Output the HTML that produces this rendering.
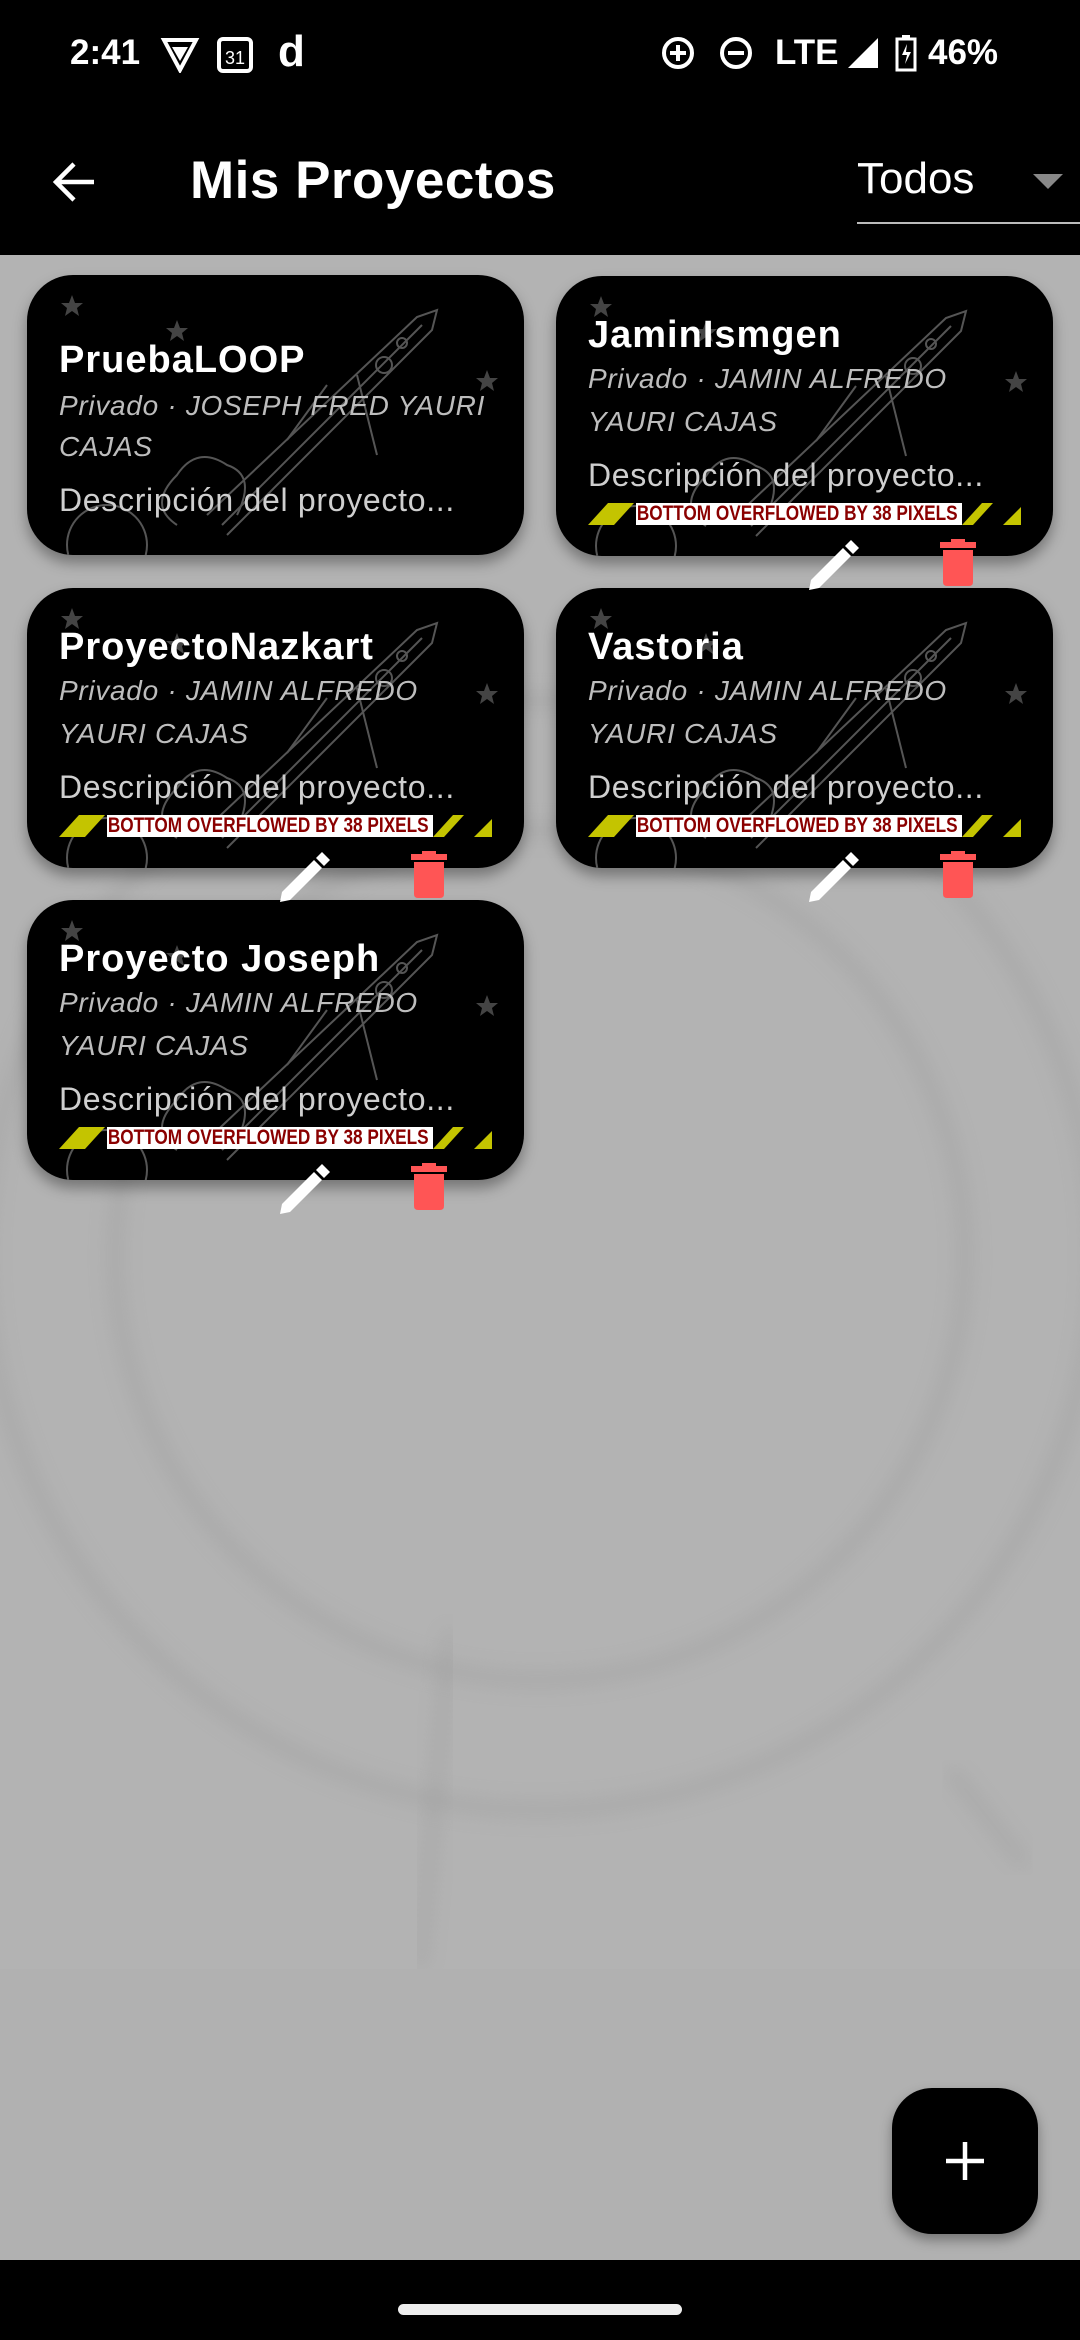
<!DOCTYPE html>
<html><head><meta charset="utf-8"><style>
*{margin:0;padding:0;box-sizing:border-box}
body{width:1080px;height:2340px;background:#b1b1b1;position:relative;overflow:hidden;font-family:"Liberation Sans",sans-serif}
.abs{position:absolute}
.card{position:absolute;width:497px;height:280px;background:#000;border-radius:46px;box-shadow:0 8px 14px rgba(0,0,0,.35);overflow:hidden}
.t{position:absolute;left:32px;color:#fff;font-weight:bold;font-size:38px;white-space:nowrap;letter-spacing:1px}
.s{position:absolute;left:32px;color:#bdbdbd;font-style:italic;font-size:28px;white-space:nowrap;letter-spacing:.7px}
.d{position:absolute;left:32px;color:#cfcfcf;font-size:32px;white-space:nowrap;letter-spacing:.7px}
.ban{position:absolute;left:32px;top:227px;width:433px;height:22px}
.bt{position:absolute;left:48px;top:0;width:326px;height:22px;background:#fff;overflow:hidden}
.bt span{display:block;white-space:nowrap;color:#8a0000;font-weight:bold;font-size:21px;line-height:22px;transform:scaleX(.82);transform-origin:0 0;width:420px;text-align:left;padding-left:1px}
.ic{position:absolute}
</style></head><body>
<div class="abs" style="left:0;top:0;width:1080px;height:255px;background:#000"></div>
<div class="abs" style="left:70px;top:33px;color:#fff;font-size:35px;font-weight:bold">2:41</div>
<svg class="abs" style="left:160px;top:37px" width="40" height="36" viewBox="0 0 40 36"><path d="M4 3h32l-16 30z" fill="none" stroke="#fff" stroke-width="4"/><path d="M12 10h16l-8 14z" fill="#fff"/></svg>
<svg class="abs" style="left:216px;top:36px" width="40" height="38"><rect x="3" y="3" width="32" height="32" rx="4" fill="none" stroke="#fff" stroke-width="4"/><text x="19" y="28" fill="#fff" font-size="18" text-anchor="middle" font-family="Liberation Sans">31</text></svg>
<div class="abs" style="left:278px;top:27px;color:#fff;font-size:44px;font-weight:bold">d</div>
<svg class="abs" style="left:660px;top:35px" width="36" height="36"><circle cx="18" cy="18" r="14" fill="none" stroke="#fff" stroke-width="4"/><path d="M18 10v16M10 18h16" stroke="#fff" stroke-width="4"/></svg>
<svg class="abs" style="left:718px;top:35px" width="36" height="36"><circle cx="18" cy="18" r="14" fill="none" stroke="#fff" stroke-width="4"/><path d="M10 18h16" stroke="#fff" stroke-width="4"/></svg>
<div class="abs" style="left:775px;top:33px;color:#fff;font-size:35px;font-weight:bold">LTE</div>
<svg class="abs" style="left:846px;top:36px" width="34" height="34"><path d="M32 2v30H2z" fill="#fff"/></svg>
<svg class="abs" style="left:895px;top:34px" width="22" height="38"><rect x="2" y="5" width="18" height="31" fill="none" stroke="#fff" stroke-width="3"/><rect x="7" y="1" width="8" height="5" fill="#fff"/><path d="M12 10l-5 11h5l-2 9 6-12h-5z" fill="#fff"/></svg>
<div class="abs" style="left:928px;top:33px;color:#fff;font-size:35px;font-weight:bold">46%</div>
<svg class="abs" style="left:50px;top:158px" width="48" height="48" viewBox="0 0 48 48"><path d="M44 24H6M24 6L6 24l18 18" fill="none" stroke="#fff" stroke-width="4.5"/></svg>
<div class="abs" style="left:190px;top:150px;color:#fff;font-size:53px;font-weight:bold;letter-spacing:.5px">Mis Proyectos</div>
<div class="abs" style="left:857px;top:154px;color:#fff;font-size:44px">Todos</div>
<svg class="abs" style="left:1033px;top:174px" width="30" height="16"><path d="M0 0h30L15 15z" fill="#888"/></svg>
<div class="abs" style="left:857px;top:222px;width:223px;height:2px;background:#bbb"></div>
<svg class="abs" style="left:0;top:255px" width="1080" height="1715" viewBox="0 255 1080 1715">
<defs><filter id="sh"><feGaussianBlur stdDeviation="10"/></filter></defs>
<rect x="0" y="255" width="1080" height="1714" fill="#b3b3b3"/>
<circle cx="540" cy="1255" r="555" fill="none" stroke="#959595" stroke-width="10" filter="url(#sh)" opacity=".5"/>
<circle cx="540" cy="1255" r="425" fill="none" stroke="#959595" stroke-width="10" filter="url(#sh)" opacity=".5"/>
<path d="M450 1630 L420 1969" fill="none" stroke="#959595" stroke-width="10" filter="url(#sh)" opacity=".45"/>
<path d="M950 1770 L1025 1865" fill="none" stroke="#959595" stroke-width="10" filter="url(#sh)" opacity=".45"/>
</svg>
<div class="abs" style="left:0;top:1969px;width:1080px;height:291px;background:#b1b1b1"></div>

<svg width="0" height="0" style="position:absolute"><defs>
<g id="rk" fill="none" stroke="#555" stroke-width="2">
<path d="M180 240 L390 42 L410 35 L405 55 L200 260"/><path d="M195 250 L395 50"/><path d="M300 110 l-40 55 M330 100 l20 80"/>
<circle cx="357" cy="90" r="8"/><circle cx="375" cy="68" r="5"/>
<path d="M150 250 q-30 -20 0 -50 q20 -30 50 -10 q30 10 10 50"/>
<circle cx="80" cy="270" r="40"/>
<path d="M45 20l3 8 8 0-6 5 2 8-7-5-7 5 2-8-6-5 8 0z" fill="#444" stroke="none"/>
<path d="M150 45l3 8 8 0-6 5 2 8-7-5-7 5 2-8-6-5 8 0z" fill="#444" stroke="none"/>
<path d="M460 95l3 8 8 0-6 5 2 8-7-5-7 5 2-8-6-5 8 0z" fill="#444" stroke="none"/>
</g>
<g id="pen"><path d="M4 44 L36 12 L44 20 L12 52 L2 54z" fill="#fff"/><path d="M38 10 L44 4 L52 12 L46 18z" fill="#fff"/></g>
<g id="bin"><rect x="0" y="3" width="36" height="6" fill="#f55"/><rect x="11" y="0" width="14" height="5" fill="#f55"/><path d="M3 11h30v32q0 4-4 4H7q-4 0-4-4z" fill="#f55"/></g>
<g id="ban"><path d="M0 22 L20 0 H46 L26 22z" fill="#c4c400"/><path d="M374 22 L394 0 H405 L385 22z" fill="#c4c400"/><path d="M415 22 L433 4 V22z" fill="#c4c400"/></g>
</defs></svg>

<div class="card" style="left:27px;top:275px"><svg class="abs" style="left:0;top:0" width="497" height="280"><use href="#rk"/></svg>
<div class="t" style="top:64px">PruebaLOOP</div>
<div class="s" style="top:115px">Privado · JOSEPH FRED YAURI</div>
<div class="s" style="top:156px">CAJAS</div>
<div class="d" style="top:207px">Descripción del proyecto...</div></div>

<div class="card" style="left:556px;top:276px"><svg class="abs" style="left:0;top:0" width="497" height="280"><use href="#rk"/></svg>
<div class="t" style="top:38px">JaminIsmgen</div>
<div class="s" style="top:87px">Privado · JAMIN ALFREDO</div>
<div class="s" style="top:130px">YAURI CAJAS</div>
<div class="d" style="top:181px">Descripción del proyecto...</div>
<svg class="ban" width="433" height="22"><use href="#ban"/></svg><div class="ban"><div class="bt"><span>BOTTOM OVERFLOWED BY 38 PIXELS</span></div></div></div>

<div class="card" style="left:27px;top:588px"><svg class="abs" style="left:0;top:0" width="497" height="280"><use href="#rk"/></svg>
<div class="t" style="top:38px">ProyectoNazkart</div>
<div class="s" style="top:87px">Privado · JAMIN ALFREDO</div>
<div class="s" style="top:130px">YAURI CAJAS</div>
<div class="d" style="top:181px">Descripción del proyecto...</div>
<svg class="ban" width="433" height="22"><use href="#ban"/></svg><div class="ban"><div class="bt"><span>BOTTOM OVERFLOWED BY 38 PIXELS</span></div></div></div>

<div class="card" style="left:556px;top:588px"><svg class="abs" style="left:0;top:0" width="497" height="280"><use href="#rk"/></svg>
<div class="t" style="top:38px">Vastoria</div>
<div class="s" style="top:87px">Privado · JAMIN ALFREDO</div>
<div class="s" style="top:130px">YAURI CAJAS</div>
<div class="d" style="top:181px">Descripción del proyecto...</div>
<svg class="ban" width="433" height="22"><use href="#ban"/></svg><div class="ban"><div class="bt"><span>BOTTOM OVERFLOWED BY 38 PIXELS</span></div></div></div>

<div class="card" style="left:27px;top:900px"><svg class="abs" style="left:0;top:0" width="497" height="280"><use href="#rk"/></svg>
<div class="t" style="top:38px">Proyecto Joseph</div>
<div class="s" style="top:87px">Privado · JAMIN ALFREDO</div>
<div class="s" style="top:130px">YAURI CAJAS</div>
<div class="d" style="top:181px">Descripción del proyecto...</div>
<svg class="ban" width="433" height="22"><use href="#ban"/></svg><div class="ban"><div class="bt"><span>BOTTOM OVERFLOWED BY 38 PIXELS</span></div></div></div>

<svg class="ic" style="left:807px;top:536px" width="56" height="56"><use href="#pen"/></svg>
<svg class="ic" style="left:940px;top:539px" width="36" height="48"><use href="#bin"/></svg>
<svg class="ic" style="left:278px;top:848px" width="56" height="56"><use href="#pen"/></svg>
<svg class="ic" style="left:411px;top:851px" width="36" height="48"><use href="#bin"/></svg>
<svg class="ic" style="left:807px;top:848px" width="56" height="56"><use href="#pen"/></svg>
<svg class="ic" style="left:940px;top:851px" width="36" height="48"><use href="#bin"/></svg>
<svg class="ic" style="left:278px;top:1160px" width="56" height="56"><use href="#pen"/></svg>
<svg class="ic" style="left:411px;top:1163px" width="36" height="48"><use href="#bin"/></svg>

<div class="abs" style="left:892px;top:2088px;width:146px;height:146px;background:#000;border-radius:40px;box-shadow:0 6px 12px rgba(0,0,0,.35)"></div>
<svg class="abs" style="left:944px;top:2140px" width="42" height="42"><path d="M21 2v38M2 21h38" stroke="#fff" stroke-width="4.5"/></svg>
<div class="abs" style="left:0;top:2260px;width:1080px;height:80px;background:#000"></div>
<div class="abs" style="left:398px;top:2304px;width:284px;height:11px;border-radius:6px;background:#eee"></div>
</body></html>
